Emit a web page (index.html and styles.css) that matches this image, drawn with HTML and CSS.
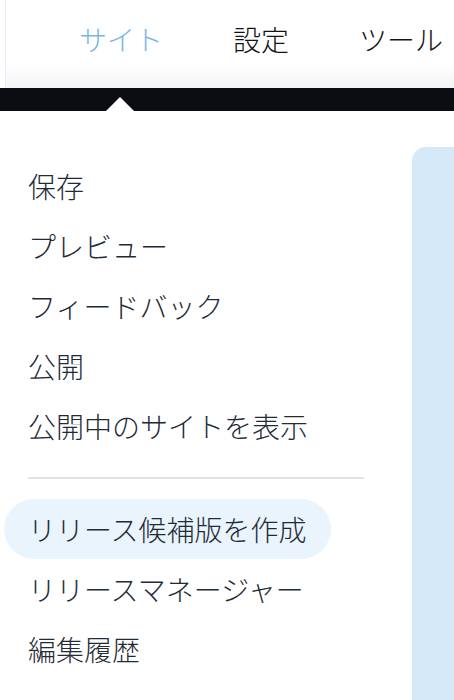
FILE: index.html
```html
<!DOCTYPE html>
<html lang="ja">
<head>
<meta charset="utf-8">
<link rel="stylesheet" href="styles.css">
</head>
<body>
<header class="topnav">
  <nav class="tabs">
    <span class="tab tab-active">サイト</span>
    <span class="tab">設定</span>
    <span class="tab">ツール</span>
  </nav>
</header>
<div class="bar"><span class="pointer"></span></div>
<div class="main">
  <ul class="menu">
    <li class="item">保存</li>
    <li class="item">プレビュー</li>
    <li class="item">フィードバック</li>
    <li class="item">公開</li>
    <li class="item">公開中のサイトを表示</li>
    <li class="divider"></li>
    <li class="item item-hover">リリース候補版を作成</li>
    <li class="item">リリースマネージャー</li>
    <li class="item">編集履歴</li>
  </ul>
  <div class="panel"></div>
</div>
</body>
</html>
```

FILE: styles.css
```css
* { box-sizing: border-box; }
html, body {
  margin: 0;
  padding: 0;
  background: #ffffff;
  font-family: "Noto Sans CJK JP", "Noto Sans", sans-serif;
  font-weight: 300;
  overflow: hidden;
}
.topnav {
  height: 88px;
  margin-left: 5px;
  border-left: 1px solid #e4eef9;
  background: linear-gradient(to bottom, #ffffff 0, #ffffff 62px, #f4f5f7 88px);
}
.tabs {
  display: flex;
  gap: 70px;
  padding-left: 73px;
  padding-top: 19px;
}
.tab {
  font-size: 28px;
  line-height: 40px;
  color: #141414;
}
.tab-active { color: #7ab6e4; }
.bar {
  position: relative;
  height: 23px;
  background: #0b0d12;
}
.pointer {
  position: absolute;
  left: 106px;
  bottom: 0;
  width: 0;
  height: 0;
  border-left: 14px solid transparent;
  border-right: 14px solid transparent;
  border-bottom: 14px solid #ffffff;
}
.main {
  display: flex;
  height: 589px;
}
.menu {
  list-style: none;
  margin: 0;
  padding: 45px 0 0 4px;
  width: 412px;
  flex: none;
  display: flex;
  flex-direction: column;
  align-items: flex-start;
}
.item {
  height: 60px;
  line-height: 60px;
  padding: 0 24px;
  font-size: 28px;
  color: #1f2c38;
  border-radius: 30px;
  white-space: nowrap;
}
.item-hover { background: #eaf4fd; }
.divider {
  align-self: stretch;
  height: 2px;
  margin: 21px 48px 20px 24px;
  background: #dde3e6;
}
.panel {
  flex: 1;
  margin-top: 36px;
  background: #d6e9f9;
  border-top-left-radius: 14px;
}
```
